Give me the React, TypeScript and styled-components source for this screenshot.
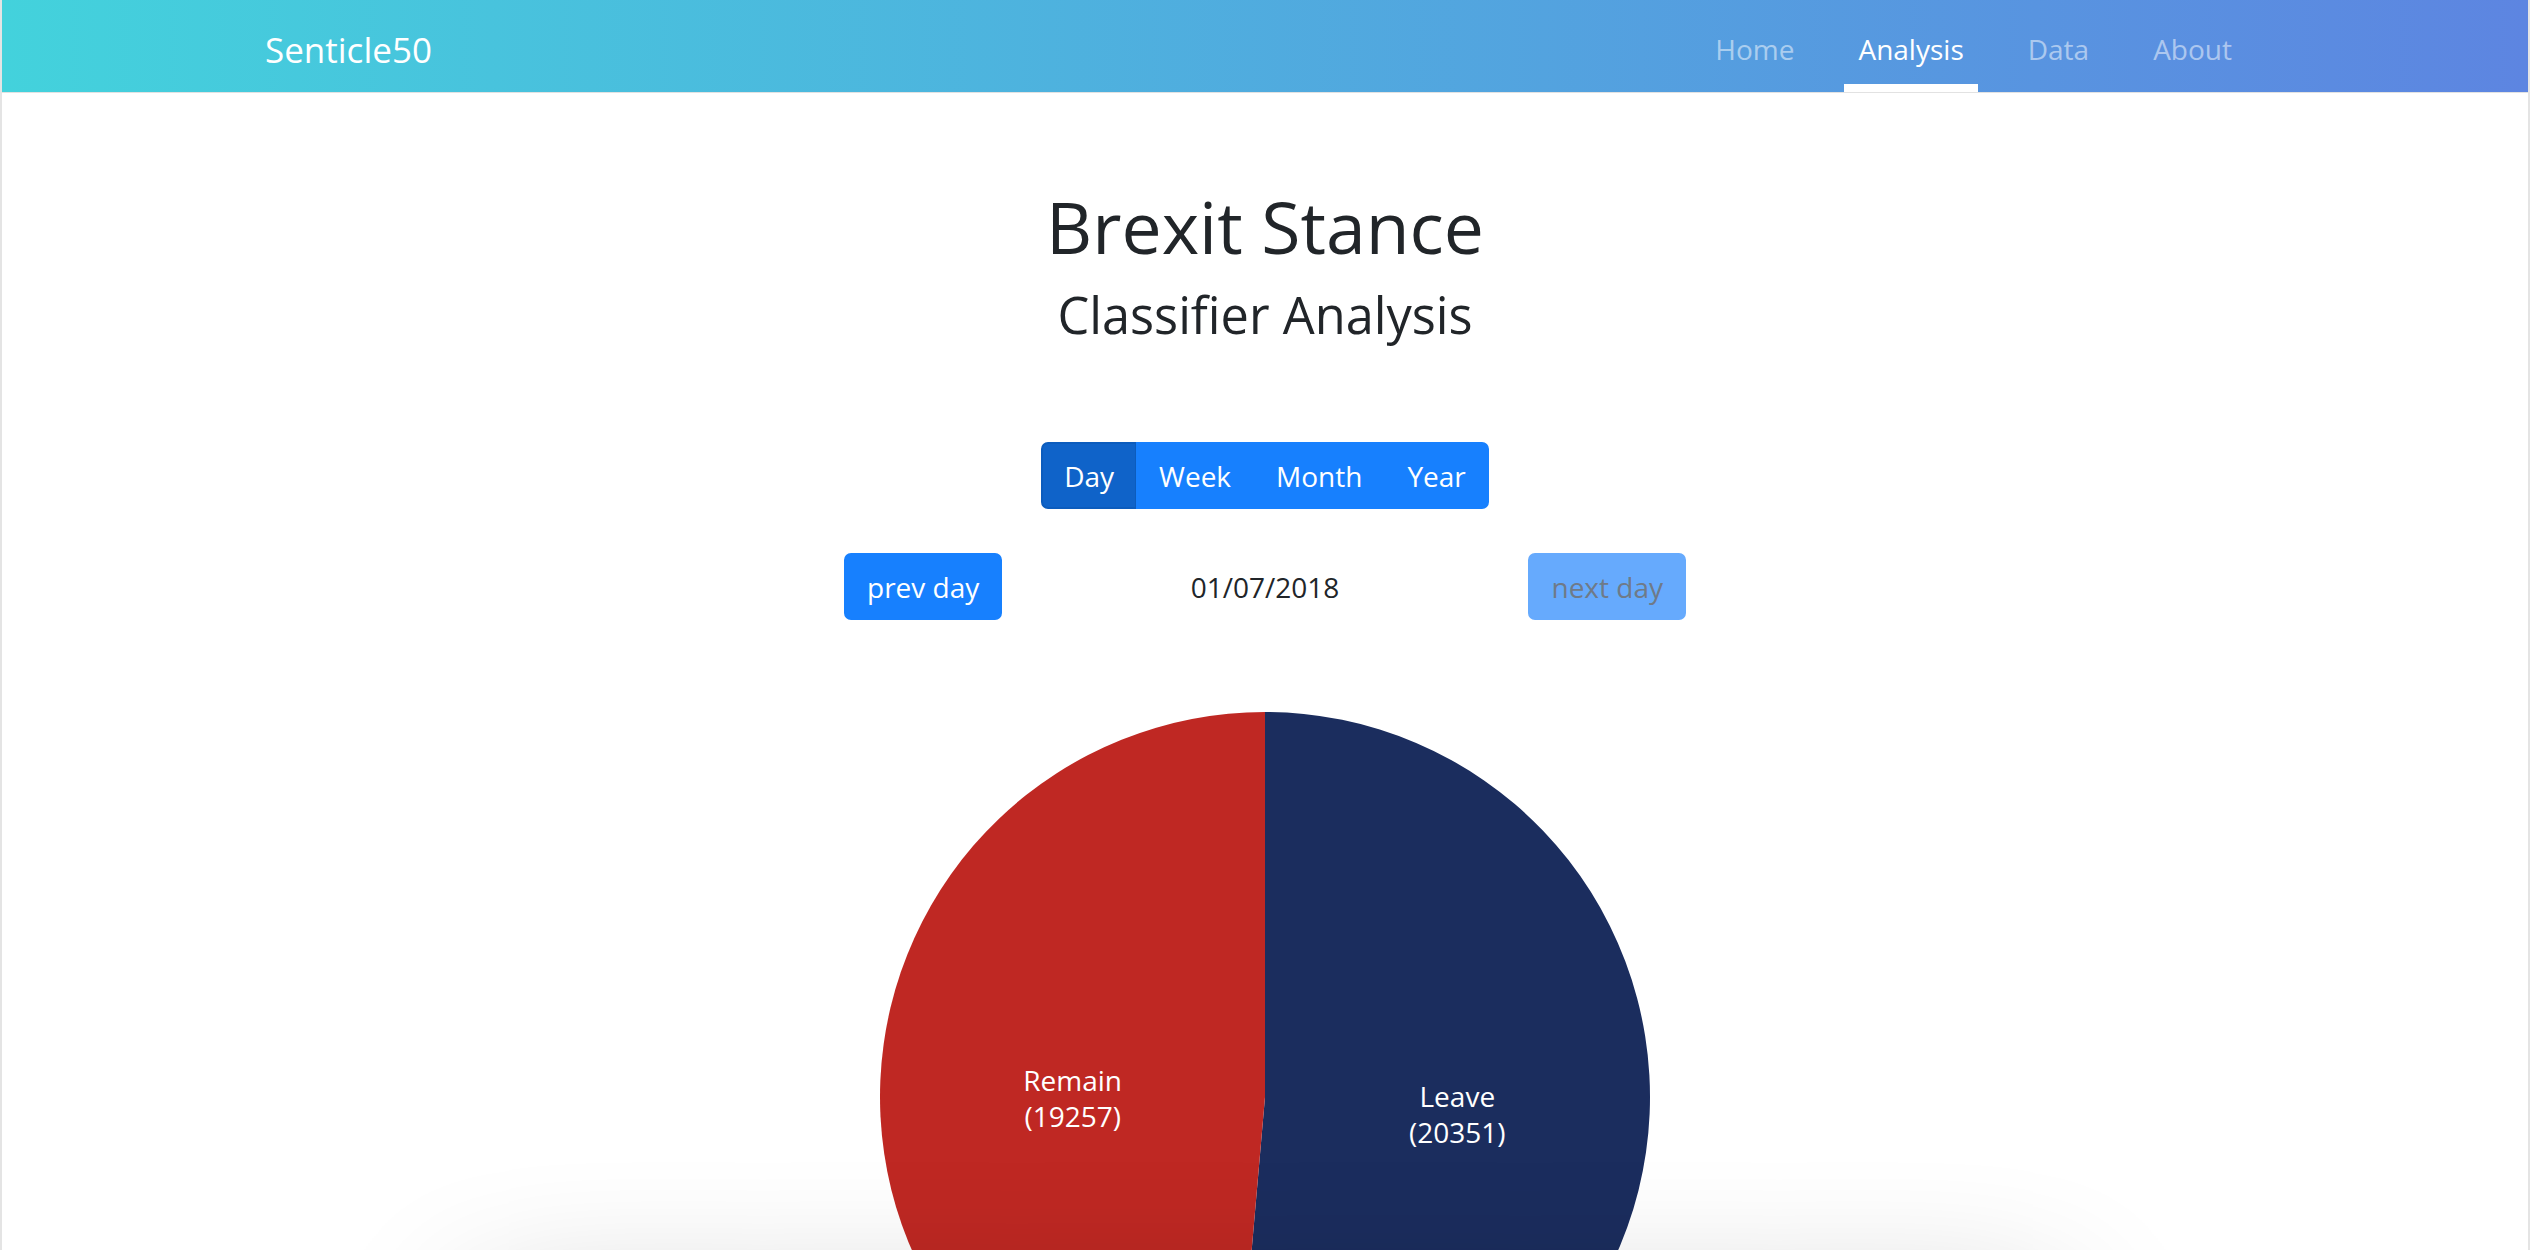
import React from "react";
import styled, { createGlobalStyle } from "styled-components";

const GlobalStyle = createGlobalStyle`
  html, body {
    margin: 0;
    padding: 0;
    background: #ffffff;
    overflow: hidden;
  }
  body {
    font-family: "Open Sans", "Noto Sans", "Liberation Sans", sans-serif;
    color: #212529;
  }
  * { box-sizing: border-box; }
`;

const Page = styled.div`
  min-height: 100vh;
  border-left: 2px solid #e4e4e4;
  border-right: 2px solid #e4e4e4;
`;

const Navbar = styled.nav`
  display: flex;
  align-items: stretch;
  height: 93px;
  padding: 0 282px 0 263px;
  background: linear-gradient(to right, #43d2dc 0%, #5d85e1 100%);
  border-bottom: 1px solid #e2e2e2;
`;

const Brand = styled.a`
  align-self: center;
  margin-top: 8px;
  font-size: 35px;
  line-height: 1.5;
  color: #ffffff;
  text-decoration: none;
`;

const NavList = styled.div`
  margin-left: auto;
  display: flex;
  align-items: stretch;
  gap: 36px;
`;

const NavLink = styled.a<{ $active?: boolean }>`
  display: flex;
  align-items: center;
  padding: 13px 14px 0;
  font-size: 28px;
  line-height: 1.5;
  text-decoration: none;
  color: ${(p) => (p.$active ? "#ffffff" : "rgba(255, 255, 255, 0.5)")};
  border-bottom: 8px solid ${(p) => (p.$active ? "#ffffff" : "transparent")};
`;

const Main = styled.main`
  display: flex;
  flex-direction: column;
  align-items: center;
`;

const Title = styled.h1`
  margin: 91px 0 15px;
  font-size: 71.5px;
  font-weight: 400;
  line-height: 1.2;
  color: #212529;
`;

const Subtitle = styled.h3`
  margin: 0;
  font-size: 50.5px;
  font-weight: 400;
  line-height: 1.2;
  color: #212529;
`;

const ButtonGroup = styled.div`
  margin-top: 97px;
  display: inline-flex;
`;

const SegButton = styled.button<{ $active?: boolean }>`
  font-family: inherit;
  font-size: 28px;
  line-height: 1.5;
  padding: 11px 21px 10px;
  color: #ffffff;
  background: ${(p) => (p.$active ? "#0f63c9" : "#1780fe")};
  border: 2px solid ${(p) => (p.$active ? "#0c5cbd" : "#1780fe")};
  border-radius: 0;
  margin-left: -1px;
  &:first-child {
    margin-left: 0;
    border-radius: 7px 0 0 7px;
  }
  &:last-child {
    border-radius: 0 7px 7px 0;
  }
`;

const DayRow = styled.div`
  margin-top: 44px;
  width: 842px;
  display: grid;
  grid-template-columns: 1fr auto 1fr;
  align-items: center;
`;

const DayButton = styled.button<{ $side: "start" | "end"; $disabled?: boolean }>`
  justify-self: ${(p) => p.$side};
  font-family: inherit;
  font-size: 28px;
  line-height: 1.5;
  padding: 10.5px 21px;
  border-radius: 7px;
  border: 2px solid ${(p) => (p.$disabled ? "#66aafd" : "#1780fe")};
  background: ${(p) => (p.$disabled ? "#66aafd" : "#1780fe")};
  color: ${(p) => (p.$disabled ? "#6f7a88" : "#ffffff")};
`;

const DateText = styled.span`
  font-size: 28px;
  line-height: 1.5;
  color: #212529;
`;

const PieSvg = styled.svg`
  display: block;
  margin-top: 77px;
`;

const PieLabel = styled.text`
  font-family: "Open Sans", "Noto Sans", sans-serif;
  font-size: 28px;
  fill: #ffffff;
  text-anchor: middle;
`;

const NextSection = styled.section`
  position: relative;
  z-index: 1;
  width: 1580px;
  height: 300px;
  background: #ffffff;
  box-shadow: 0 -178px 150px rgba(0, 0, 0, 0.3);
`;

const data = [
  { label: "Leave", value: 20351, color: "#1b2d5e" },
  { label: "Remain", value: 19257, color: "#bf2823" },
];

function Pie() {
  const cx = 400;
  const cy = 400;
  const r = 385;
  const total = data.reduce((s, d) => s + d.value, 0);
  let start = 0;
  const pt = (a: number, rad: number) => [cx + rad * Math.sin(a), cy - rad * Math.cos(a)];
  return (
    <PieSvg width={800} height={800} viewBox="0 0 800 800">
      {data.map((d) => {
        const sweep = (d.value / total) * Math.PI * 2;
        const a0 = start;
        const a1 = start + sweep;
        start = a1;
        const [x0, y0] = pt(a0, r);
        const [x1, y1] = pt(a1, r);
        const large = sweep > Math.PI ? 1 : 0;
        const [lx, ly] = pt((a0 + a1) / 2, r / 2);
        return (
          <g key={d.label}>
            <path
              d={`M${cx},${cy} L${x0},${y0} A${r},${r} 0 ${large} 1 ${x1},${y1} Z`}
              fill={d.color}
            />
            <PieLabel x={lx} y={ly + 2}>
              {d.label}
            </PieLabel>
            <PieLabel x={lx} y={ly + 38}>
              ({d.value})
            </PieLabel>
          </g>
        );
      })}
    </PieSvg>
  );
}

export default function App() {
  return (
    <Page>
      <GlobalStyle />
      <Navbar>
        <Brand href="#">Senticle50</Brand>
        <NavList>
          <NavLink href="#">Home</NavLink>
          <NavLink href="#" $active>
            Analysis
          </NavLink>
          <NavLink href="#">Data</NavLink>
          <NavLink href="#">About</NavLink>
        </NavList>
      </Navbar>
      <Main>
        <Title>Brexit Stance</Title>
        <Subtitle>Classifier Analysis</Subtitle>
        <ButtonGroup>
          <SegButton $active>Day</SegButton>
          <SegButton>Week</SegButton>
          <SegButton>Month</SegButton>
          <SegButton>Year</SegButton>
        </ButtonGroup>
        <DayRow>
          <DayButton $side="start">prev day</DayButton>
          <DateText>01/07/2018</DateText>
          <DayButton $side="end" $disabled disabled>
            next day
          </DayButton>
        </DayRow>
        <Pie />
        <NextSection />
      </Main>
    </Page>
  );
}
